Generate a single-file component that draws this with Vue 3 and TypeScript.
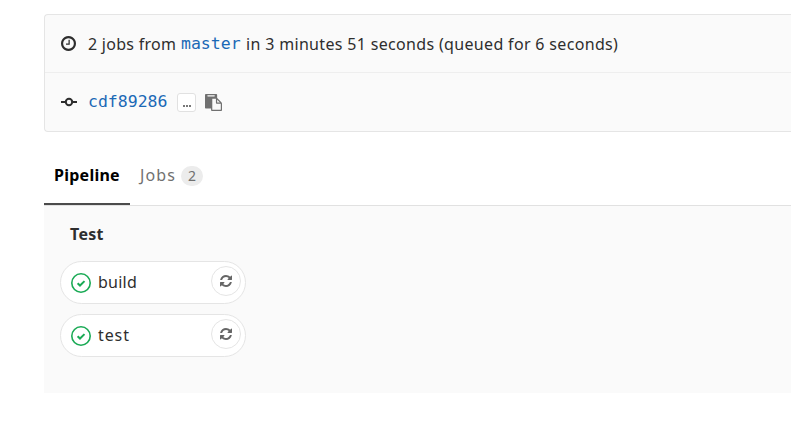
<script setup lang="ts">
interface Job {
  id: number
  name: string
}

const jobs: Job[] = [
  { id: 1, name: 'build' },
  { id: 2, name: 'test' },
]
</script>

<template>
  <main class="page">
    <section class="info">
      <div class="info-row">
        <svg class="clock" viewBox="0 128 1536 1536"><path d="M896 544v448q0 14-9 23t-23 9h-320q-14 0-23-9t-9-23v-64q0-14 9-23t23-9h224v-352q0-14 9-23t23-9h64q14 0 23 9t9 23zm416 352q0-148-73-273t-198-198-273-73-273 73-198 198-73 273 73 273 198 198 273 73 273-73 198-198 73-273zm224 0q0 209-103 385.5t-279.5 279.5-385.5 103-385.5-103-279.5-279.5-103-385.5 103-385.5 279.5-279.5 385.5-103 385.5 103 279.5 279.5 103 385.5z" /></svg>
        <span class="count">2 jobs from</span>
        <a class="mono branch">master</a>
        <span class="duration">in 3 minutes 51 seconds (queued for 6 seconds)</span>
      </div>
      <div class="info-row commit-row">
        <svg class="commit" viewBox="0 0 16 10"><path d="M0 5h4.5M11.500 5H16" /><circle cx="8" cy="5" r="3.200" /></svg>
        <a class="mono sha">cdf89286</a>
        <button class="more"><i></i><i></i><i></i></button>
        <svg class="paste" viewBox="0 0 1792 1792"><path d="M768 1664h896v-640h-416q-40 0-68-28t-28-68v-416h-384v1152zm256-1440v-64q0-13-9.500-22.500t-22.500-9.500h-704q-13 0-22.500 9.500t-9.500 22.500v64q0 13 9.500 22.500t22.500 9.500h704q13 0 22.500-9.500t9.500-22.500zm256 672h299l-299-299v299zm512 128v672q0 40-28 68t-68 28h-960q-40 0-68-28t-28-68v-160h-544q-40 0-68-28t-28-68v-1344q0-40 28-68t68-28h1088q40 0 68 28t28 68v328q21 13 36 28l408 408q28 28 48 76t20 88z" /></svg>
      </div>
    </section>

    <nav class="tabs">
      <a class="tab active"><span class="tab-pipeline">Pipeline</span></a>
      <a class="tab"><span class="tab-jobs">Jobs</span><span class="badge">{{ jobs.length }}</span></a>
    </nav>

    <section class="graph">
      <h2 class="stage">Test</h2>
      <ul class="jobs">
        <li v-for="job in jobs" :key="job.id" class="job">
          <svg class="status" viewBox="0 0 20 20"><circle cx="10" cy="10" r="9.200" /><path d="M6.600 10.200l2.400 2.300 4.500-4.400" /></svg>
          <span class="job-name" :class="job.name">{{ job.name }}</span>
          <button class="retry">
            <svg viewBox="0 128 1536 1536"><path d="M1511 1056q0 5-1 7-64 268-268 434.500t-478 166.500q-146 0-282.500-55t-243.500-157l-129 129q-19 19-45 19t-45-19-19-45v-448q0-26 19-45t45-19h448q26 0 45 19t19 45-19 45l-137 137q71 66 161 102t187 36q134 0 250-65t186-179q11-17 53-117 8-23 30-23h192q13 0 22.500 9.500t9.500 22.500zm25-800v448q0 26-19 45t-45 19h-448q-26 0-45-19t-19-45 19-45l138-138q-148-137-349-137-134 0-250 65t-186 179q-11 17-53 117-8 23-30 23h-199q-13 0-22.500-9.500t-9.500-22.500v-7q65-268 270-434.500t480-166.500q146 0 284 55.500t245 156.500l130-129q19-19 45-19t45 19 19 45z" /></svg>
          </button>
        </li>
      </ul>
    </section>
  </main>
</template>

<style>
body {
  background: #fff;
  overflow: hidden;
}
</style>

<style scoped>
* {
  box-sizing: border-box;
}
.page {
  height: 435px;
  padding: 14px 0 0 44px;
  font: 16px/20px "Noto Sans", "Open Sans", sans-serif;
  color: #2e2e2e;
  white-space: nowrap;
  overflow: hidden;
}
svg {
  display: block;
  flex: none;
  fill: currentColor;
}
.info {
  height: 118px;
  border: 1px solid #e5e5e5;
  border-right: 0;
  border-radius: 4px 0 0 4px;
  background: #fafafa;
}
.info-row {
  display: flex;
  align-items: center;
  height: 58px;
  padding-left: 16px;
  border-bottom: 1px solid #eee;
}
.commit-row {
  border-bottom: 0;
}
.clock {
  width: 15px;
  height: 15px;
  margin-right: 12px;
}
.count {
  width: 93px;
  letter-spacing: 0.270px;
}
.duration {
  letter-spacing: 0.330px;
}
.mono {
  font-family: "DejaVu Sans Mono", monospace;
  font-size: 16.500px;
  color: #1b69b6;
}
.branch {
  width: 65px;
  padding-top: 1px;
}
.commit {
  width: 16px;
  height: 10px;
  margin-right: 11px;
  fill: none;
  stroke: currentColor;
  stroke-width: 2;
}
.sha {
  width: 89px;
}
.more {
  display: flex;
  align-items: flex-end;
  justify-content: center;
  gap: 1px;
  width: 19px;
  height: 19px;
  padding: 0 0 4px;
  border: 1px solid #e1e1e1;
  border-radius: 3px;
  background: #fff;
}
.more i {
  width: 2px;
  height: 2px;
  background: #777;
}
.paste {
  width: 17px;
  height: 17px;
  margin-left: 9px;
  color: #707070;
}
.tabs {
  display: flex;
  height: 74px;
  border-bottom: 1px solid #e1e1e1;
}
.tab {
  display: flex;
  align-items: center;
  height: 73px;
  padding: 15px 10px 0;
  color: #707070;
}
.tab.active {
  width: 86px;
  border-bottom: 2px solid #4b4b4b;
  color: #000;
  font-weight: 700;
  letter-spacing: 0.250px;
}
.tab-jobs {
  width: 41px;
  margin-bottom: 2px;
  letter-spacing: 1.100px;
}
.badge {
  width: 22px;
  height: 20px;
  border-radius: 10px;
  background: #ececec;
  font-size: 14px;
  text-align: center;
}
.graph {
  height: 187px;
  padding: 18px 0 0 16px;
  background: #fafafa;
}
.stage {
  margin: 0 0 17px 10px;
  font-size: 16px;
  line-height: 20px;
  font-weight: 700;
  letter-spacing: 0.300px;
}
.jobs {
  display: flex;
  flex-direction: column;
  gap: 10px;
  margin: 0;
  padding: 0;
  list-style: none;
}
.job {
  display: flex;
  align-items: center;
  width: 186px;
  height: 43px;
  padding: 0 4px 0 10px;
  border: 1px solid #e5e5e5;
  border-radius: 22px;
  background: #fff;
}
.status {
  width: 20px;
  height: 20px;
  margin: 1px 7px 0 0;
  fill: none;
  stroke: #1aaa55;
  stroke-width: 1.600;
}
.status path {
  stroke-width: 2;
}
.job-name {
  margin-bottom: 1px;
  letter-spacing: 0.250px;
}
.job-name.test {
  letter-spacing: 0.900px;
}
.retry {
  display: grid;
  place-items: center;
  width: 30px;
  height: 30px;
  margin: 0 0 3px auto;
  padding: 0 0 1px;
  border: 1px solid #e5e5e5;
  border-radius: 50%;
  background: #fff;
  color: #666;
}
.retry svg {
  width: 12px;
  height: 12px;
}
</style>
